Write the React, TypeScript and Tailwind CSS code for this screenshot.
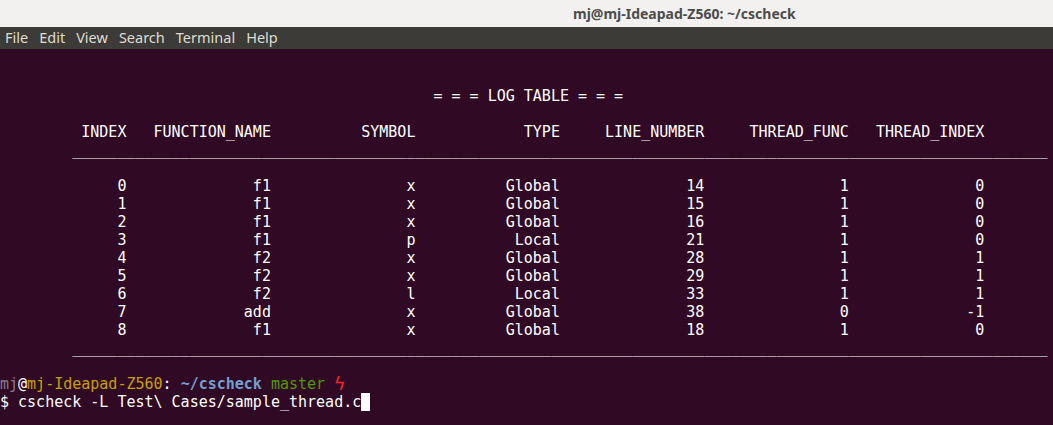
import React from "react";

const mono = "font-['DejaVu_Sans_Mono','Liberation_Mono',monospace]";

const ends = [14, 30, 46, 62, 78, 94, 109];

// builds one terminal line with every cell right-aligned to its end column
const row = (cells: string[]) => {
  let out = "";
  cells.forEach((c, i) => {
    out += " ".repeat(Math.max(0, ends[i] - out.length - c.length)) + c;
  });
  return out;
};

const data = [
  ["0", "f1", "x", "Global", "14", "1", "0"],
  ["1", "f1", "x", "Global", "15", "1", "0"],
  ["2", "f1", "x", "Global", "16", "1", "0"],
  ["3", "f1", "p", "Local", "21", "1", "0"],
  ["4", "f2", "x", "Global", "28", "1", "1"],
  ["5", "f2", "x", "Global", "29", "1", "1"],
  ["6", "f2", "l", "Local", "33", "1", "1"],
  ["7", "add", "x", "Global", "38", "0", "-1"],
  ["8", "f1", "x", "Global", "18", "1", "0"],
];

const rule = " ".repeat(8) + "_".repeat(108);

const lines: string[] = [
  "",
  "",
  " ".repeat(48) + "= = = LOG TABLE = = =",
  "",
  row(["INDEX", "FUNCTION_NAME", "SYMBOL", "TYPE", "LINE_NUMBER", "THREAD_FUNC", "THREAD_INDEX"]),
  rule,
  "",
  ...data.map(row),
  rule,
  "",
];

const menu = ["File", "Edit", "View", "Search", "Terminal", "Help"];

const App: React.FC = () => {
  return (
    <div className="w-[1053px] h-[425px] overflow-hidden flex flex-col bg-[#300a24]">
      {/* title bar */}
      <div className="h-[27px] shrink-0 bg-[#f2f1f0] flex items-center pl-[573px]">
        <span className="font-['Noto_Sans',sans-serif] font-bold text-[14px] text-[#4c4c4c] whitespace-nowrap">
          mj@mj-Ideapad-Z560: ~/cscheck
        </span>
      </div>

      {/* menu bar */}
      <div className="h-[22px] shrink-0 bg-[#3c3b37] flex items-center gap-[11px] pl-[5px] font-['Noto_Sans',sans-serif] text-[14.5px] text-[#dfdbd2]">
        {menu.map((m) => (
          <span key={m}>{m}</span>
        ))}
      </div>

      {/* terminal */}
      <div className={`${mono} text-[15px] leading-[18px] text-white whitespace-pre pt-[2px]`}>
        {lines.map((l, i) => (
          <div key={i} className="h-[18px]">
            {l}
          </div>
        ))}
        <div className="h-[18px] flex items-center">
          <span className="text-[#8a7a8c]">mj</span>
          <span>@</span>
          <span className="text-[#c4a000]">mj-Ideapad-Z560</span>
          <span>: </span>
          <span className="text-[#729fcf] font-bold">~/cscheck</span>
          <span> </span>
          <span className="text-[#4e9a06]">master</span>
          <span> </span>
          <span className="text-[#ef2929] text-[18px] leading-[18px] w-[9px]">ϟ</span>
        </div>
        <div className="h-[18px] flex items-center">
          <span>$ cscheck -L Test\ Cases/sample_thread.c</span>
          <span className="inline-block w-[9px] h-[18px] bg-white" />
        </div>
      </div>
    </div>
  );
};

export default App;
